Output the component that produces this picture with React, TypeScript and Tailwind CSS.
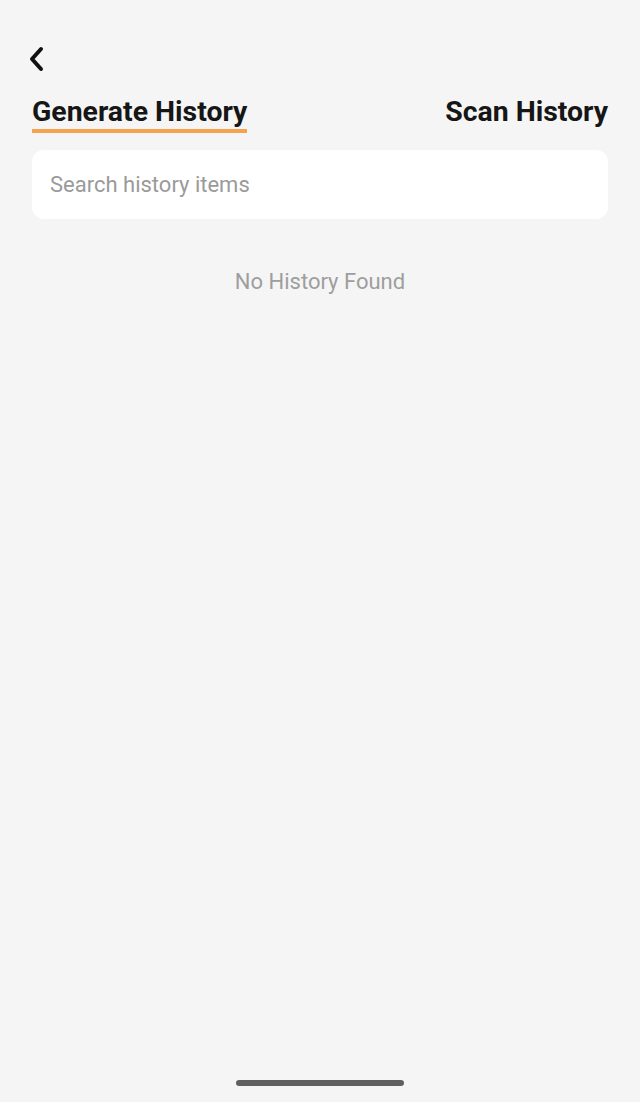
import React from 'react';

const App: React.FC = () => {
  return (
    <div className="relative w-[640px] h-[1102px] bg-[#f5f5f5] font-['Roboto',sans-serif] overflow-hidden">
      <div className="px-8">
        <div className="pt-[46px] h-[72px]">
          <svg width="18" height="26" viewBox="0 0 18 26" className="-ml-[4px]">
            <path d="M13 3 L4 13 L13 23" fill="none" stroke="#111" strokeWidth="4" strokeLinecap="round" strokeLinejoin="round" />
          </svg>
        </div>

        <div className="flex justify-between items-start mt-[22px]">
          <div className="flex flex-col">
            <span className="text-[28.4px] leading-[35px] font-bold text-[#161616]">Generate History</span>
            <div className="h-[4px] bg-[#f7a24f]" />
          </div>
          <span className="text-[28.4px] leading-[35px] font-bold text-[#161616]">Scan History</span>
        </div>

        <div className="mt-[17px] h-[69px] bg-white rounded-[12px] flex items-center px-[18px]">
          <input
            className="w-full bg-transparent outline-none text-[22px] text-[#222] placeholder:text-[#9a9a9a]"
            placeholder="Search history items"
          />
        </div>

        <p className="mt-[49px] text-center text-[22px] leading-[28px] text-[#9e9e9e]">No History Found</p>
      </div>

      <div className="absolute bottom-[16px] left-1/2 -translate-x-1/2 w-[168px] h-[6px] rounded-full bg-[#5f5f5f]" />
    </div>
  );
};

export default App;
